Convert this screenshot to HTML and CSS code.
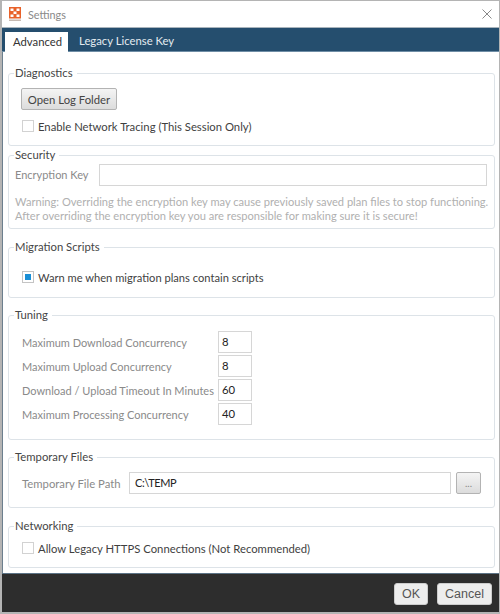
FILE: index.html
```html
<!DOCTYPE html>
<html lang="en">
<head>
<meta charset="utf-8">
<title>Settings</title>
<link rel="stylesheet" href="styles.css">
</head>
<body>
<div class="window">
  <header class="titlebar">
    <svg class="app-icon" viewBox="0 0 12 14" aria-hidden="true">
      <rect x="0" y="0" width="12" height="11.5" fill="#e8622a"/>
      <path d="M0 13.2h12" stroke="#b9a99f" stroke-width="1.2"/>
      <g fill="#fff">
        <rect x="1.5" y="1.5" width="3" height="2.5"/><rect x="7.5" y="1.5" width="3" height="2.5"/>
        <rect x="4.5" y="4.5" width="3" height="2.5"/>
        <rect x="1.5" y="7.5" width="3" height="2.5"/><rect x="7.5" y="7.5" width="3" height="2.5"/>
      </g>
    </svg>
    <span class="title">Settings</span>
    <svg class="close" viewBox="0 0 10 10" aria-hidden="true"><path d="M.5.5l9 9M9.5.5l-9 9" stroke="#888" stroke-width="1" fill="none"/></svg>
  </header>
  <nav class="tabs">
    <span class="tab active">Advanced</span>
    <span class="tab">Legacy License Key</span>
  </nav>
  <main class="content">
    <fieldset class="group diagnostics">
      <legend>Diagnostics</legend>
      <button class="btn log-btn" type="button">Open Log Folder</button>
      <label class="check"><span class="box"></span>Enable Network Tracing (This Session Only)</label>
    </fieldset>
    <fieldset class="group security">
      <legend>Security</legend>
      <div class="row key-row">
        <span class="muted key-label">Encryption Key</span>
        <span class="field key-field"></span>
      </div>
      <p class="warning">Warning: Overriding the encryption key may cause previously saved plan files to stop functioning.<br>After overriding the encryption key you are responsible for making sure it is secure!</p>
    </fieldset>
    <fieldset class="group migration">
      <legend>Migration Scripts</legend>
      <label class="check"><span class="box checked"></span>Warn me when migration plans contain scripts</label>
    </fieldset>
    <fieldset class="group tuning">
      <legend>Tuning</legend>
      <div class="tune-grid">
        <span class="muted">Maximum Download Concurrency</span><span class="field num">8</span>
        <span class="muted">Maximum Upload Concurrency</span><span class="field num">8</span>
        <span class="muted">Download / Upload Timeout In Minutes</span><span class="field num">60</span>
        <span class="muted">Maximum Processing Concurrency</span><span class="field num">40</span>
      </div>
    </fieldset>
    <fieldset class="group temp">
      <legend>Temporary Files</legend>
      <div class="row path-row">
        <span class="muted path-label">Temporary File Path</span>
        <span class="field path-field">C:\TEMP</span>
        <button class="btn browse" type="button">...</button>
      </div>
    </fieldset>
    <fieldset class="group networking">
      <legend>Networking</legend>
      <label class="check"><span class="box"></span>Allow Legacy HTTPS Connections (Not Recommended)</label>
    </fieldset>
  </main>
  <footer class="footer">
    <button class="btn ok" type="button">OK</button>
    <button class="btn cancel" type="button">Cancel</button>
  </footer>
</div>
</body>
</html>
```
FILE: styles.css
```css
* { box-sizing: border-box; }
html, body { margin: 0; padding: 0; }
body { width: 500px; height: 614px; overflow: hidden; background: #fff; font-family: Lato, "Open Sans", sans-serif; font-size: 11.3px; color: #3f3f3f; }
.window { width: 500px; height: 614px; display: flex; flex-direction: column; border: 1px solid #b4b4b4; border-left-width: 2px; border-bottom-width: 2px; }
.titlebar { height: 26px; flex: none; display: flex; align-items: center; padding: 0 7px 0 7px; background: #fff; }
.app-icon { width: 12px; height: 14px; flex: none; }
.title { margin-left: 7px; color: #8a8a8a; font-size: 10.8px; }
.close { width: 10px; height: 10px; margin-left: auto; }
.tabs { height: 25px; flex: none; display: flex; align-items: flex-end; padding-left: 3px; background: #254e6e; border-top: 1px solid #a9b4bc; border-bottom: 1px solid #6f8ea6; }
.tab { height: 19px; line-height: 18px; padding: 0 7px 0 11px; color: #e4ebf0; white-space: nowrap; }
.tab.active { width: 63px; height: 20px; margin-bottom: -1px; padding: 1px 0 0 8px; background: #fff; color: #333; }
.content { flex: 1; min-height: 0; padding: 13px 4px 0 5px; border-left: 1px solid #6c7f8e; }
.group { margin: 0; min-width: 0; padding: 0 12px; border: 1px solid #dde3e8; border-radius: 3px; }
.group legend { margin-left: -7px; padding: 0 4px 0 1px; height: 16px; line-height: 16px; color: #454545; white-space: nowrap; }
.diagnostics { height: 81px; }
.security { height: 82px; margin-top: 1px; }
.migration { height: 59px; margin-top: 10px; }
.tuning { height: 133px; margin-top: 9px; }
.temp { height: 59px; margin-top: 9px; }
.networking { height: 50px; margin-top: 10px; }
.btn { font: inherit; color: #444; border: 1px solid #b3b3b3; border-radius: 2px; background: linear-gradient(#f4f4f4, #dcdcdc); padding: 0; }
.log-btn { display: block; width: 96px; height: 22px; margin-top: 7px; }
.check { display: flex; align-items: center; height: 14px; margin-top: 9px; margin-left: 1px; white-space: nowrap; }
.box { width: 12px; height: 12px; margin-right: 4px; flex: none; background: #fff; border: 1px solid #d2d2d2; }
.box.checked { padding: 2px; background: #1a8fd6; background-clip: content-box; border-color: #c4c4c4; }
.row { display: flex; align-items: center; }
.muted { color: #8a8a8a; font-size: 11px; white-space: nowrap; }
.field { display: block; background: #fff; border: 1px solid #d6d6d6; color: #222; }
.key-row { height: 22px; margin-top: 0; margin-left: -6px; margin-right: -5px; }
.key-field { flex: 1; height: 22px; margin-top: 2px; }
.key-label { width: 84px; flex: none; }
.warning { margin: 10px -6px 0 -6px; line-height: 14px; font-size: 11.12px; color: #b0b0b0; white-space: nowrap; }
.migration .check { margin-top: 15px; font-size: 11.15px; }
.tune-grid { display: grid; grid-template-columns: 196px 34px; grid-auto-rows: 22px; row-gap: 2px; margin: 8px 0 0 1px; align-items: center; }
.num { height: 22px; line-height: 19px; padding-left: 3px; }
.path-row { margin: 7px 0 0 1px; height: 22px; }
.path-label { width: 107px; flex: none; font-size: 11.3px; }
.path-field { flex: 1; height: 22px; line-height: 19px; padding-left: 5px; font-size: 11px; letter-spacing: -.4px; }
.browse { width: 25px; height: 22px; margin-left: 5px; margin-right: 1px; font-size: 10px; color: #888; }
.networking .check { margin-top: 7px; }
.footer { height: 39px; flex: none; display: flex; justify-content: flex-end; align-items: center; gap: 9px; padding: 2px 7px 0 0; background: #2d2d2d; border-top: 1px solid #5c7386; }
.footer .btn { height: 22px; font-family: "Liberation Sans", sans-serif; font-size: 12.5px; background: #ededed; color: #555; border-color: #ccc; border-radius: 3px; }
.ok { width: 34px; }
.cancel { width: 55px; }
```
